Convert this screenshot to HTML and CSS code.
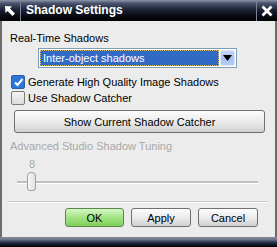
FILE: index.html
```html
<!DOCTYPE html>
<html lang="en">
<head>
    <meta charset="UTF-8">
    <title>Shadow Settings</title>
    <link rel="stylesheet" href="styles.css">
</head>
<body>
    <div class="window">
        <div class="titlebar">
            <div class="tb-icon">
                <svg width="12" height="12" viewBox="0 0 12 12">
                    <path d="M1 1 L8 1.5 L6 3.5 L11 8.5 L8.5 11 L3.5 6 L1.5 8 Z" fill="#fff"/>
                </svg>
            </div>
            <div class="tb-title">Shadow Settings</div>
            <div class="tb-close">
                <svg width="12" height="12" viewBox="0 0 12 12">
                    <path d="M1.5 1.5 L10.5 10.5 M10.5 1.5 L1.5 10.5" stroke="#fff" stroke-width="2.8"/>
                </svg>
            </div>
        </div>

        <div class="content">
            <div class="label">Real-Time Shadows</div>
            <div class="combo">
                <div class="combo-value"><span>Inter-object shadows</span></div>
                <div class="combo-btn">
                    <svg width="9" height="6" viewBox="0 0 9 6"><path d="M0 0 H9 L4.5 6 Z" fill="#000"/></svg>
                </div>
            </div>

            <div class="check-row">
                <span class="check checked">
                    <svg width="11" height="11" viewBox="0 0 11 11"><path d="M2 5.5 L4.5 8 L9.5 2" stroke="#fff" stroke-width="2" fill="none"/></svg>
                </span>
                <span>Generate High Quality Image Shadows</span>
            </div>
            <div class="check-row">
                <span class="check"></span>
                <span>Use Shadow Catcher</span>
            </div>

            <div class="btn wide">Show Current Shadow Catcher</div>

            <div class="label disabled">Advanced Studio Shadow Tuning</div>
            <div class="slider-value">8</div>
            <div class="slider">
                <div class="track"></div>
                <div class="thumb"></div>
            </div>

            <div class="separator"></div>

            <div class="actions">
                <div class="btn ok">OK</div>
                <div class="btn">Apply</div>
                <div class="btn">Cancel</div>
            </div>
        </div>

        <div class="bottombar"></div>
    </div>
</body>
</html>
```

FILE: styles.css
```css
body {
    margin: 0;
    font-family: "Liberation Sans", Arial, sans-serif;
    font-size: 11px;
    color: #000;
    background-color: #ececec;
}
.window {
    width: 277px;
    height: 247px;
    display: flex;
    flex-direction: column;
}
.titlebar {
    height: 21px;
    display: flex;
    align-items: stretch;
    background: linear-gradient(#8c95a8 0, #4a546e 15%, #1e2538 45%, #0a0c14 75%, #000 100%);
    color: #fff;
}
.tb-icon, .tb-close {
    width: 20px;
    display: flex;
    align-items: center;
    justify-content: center;
}
.tb-icon {
    border-right: 1px solid #7b8296;
}
.tb-close {
    border-left: 1px solid #7b8296;
}
.tb-title {
    flex: 1;
    padding-left: 5px;
    font-weight: bold;
    font-size: 12px;
    line-height: 21px;
}
.content {
    flex: 1;
    border-left: 2px solid #6c6c6c;
    border-right: 2px solid #6c6c6c;
    background-color: #ececec;
    padding: 10px 8px 0 8px;
    display: flex;
    flex-direction: column;
}
.label {
    height: 14px;
    line-height: 14px;
}
.disabled {
    color: #a8a8a8;
}
.combo {
    margin: 3px 0 0 28px;
    width: 199px;
    height: 20px;
    box-sizing: border-box;
    border: 1px solid #7f9db9;
    background: #fff;
    display: flex;
    padding: 1px;
}
.combo-value {
    flex: 1;
    background: #316ac5;
    color: #fff;
    border: 1px dotted #e0c060;
    padding-left: 2px;
    line-height: 14px;
}
.combo-btn {
    width: 15px;
    margin-left: 1px;
    border-radius: 2px;
    background: linear-gradient(#c6d7fb, #a7c0f4 50%, #b7cdf8);
    border: 1px solid #dde6fb;
    box-sizing: border-box;
    display: flex;
    align-items: center;
    justify-content: center;
}
.check-row {
    margin-top: 7px;
    margin-left: 1px;
    display: flex;
    align-items: center;
    gap: 3px;
    height: 14px;
}
.check-row + .check-row {
    margin-top: 2px;
}
.check {
    width: 14px;
    height: 14px;
    box-sizing: border-box;
    border: 1px solid #7b7b7b;
    border-radius: 2px;
    background: linear-gradient(#f4f4f4, #dcdcdc);
    display: flex;
    align-items: center;
    justify-content: center;
}
.check.checked {
    background: #2d76d8;
    border-color: #2b5da8;
}
.btn {
    height: 19px;
    box-sizing: border-box;
    border: 1px solid #707070;
    border-radius: 3px;
    background: linear-gradient(#fdfdfd, #e9e9e9 55%, #d0d0d0);
    display: flex;
    align-items: center;
    justify-content: center;
}
.btn.wide {
    margin: 5px 2px 0 4px;
    height: 23px;
}
.btn.wide + .label {
    margin-top: 6px;
}
.slider-value {
    margin: 4px 0 0 19px;
    color: #a8a8a8;
    height: 14px;
    line-height: 14px;
}
.slider {
    margin: 0 0 0 7px;
    width: 241px;
    height: 22px;
    position: relative;
}
.track {
    margin-top: 10px;
    height: 2px;
    background: #c0c0c0;
    border-bottom: 1px solid #fff;
}
.thumb {
    position: absolute;
    left: 10px;
    top: 1px;
    width: 9px;
    height: 19px;
    box-sizing: border-box;
    border: 1px solid #a0a0a0;
    border-radius: 4px 4px 3px 3px;
    background: linear-gradient(90deg, #f6f6f6, #e2e2e2);
}
.separator {
    margin: 8px -1px 0 -3px;
    height: 1px;
    background: #c8c8c8;
    border-bottom: 1px solid #fff;
}
.actions {
    display: flex;
    justify-content: flex-end;
    gap: 7px;
    margin-top: 5px;
    padding-right: 9px;
}
.actions .btn {
    width: 60px;
}
.actions .btn.ok {
    width: 59px;
    border-color: #5a8a4a;
    background: linear-gradient(#d6f5c6, #9ee27e 55%, #7ed05a);
}
.bottombar {
    height: 10px;
    background: linear-gradient(#8c8c8c 0, #6a7590 25%, #2a3048 55%, #000 100%);
}
```
